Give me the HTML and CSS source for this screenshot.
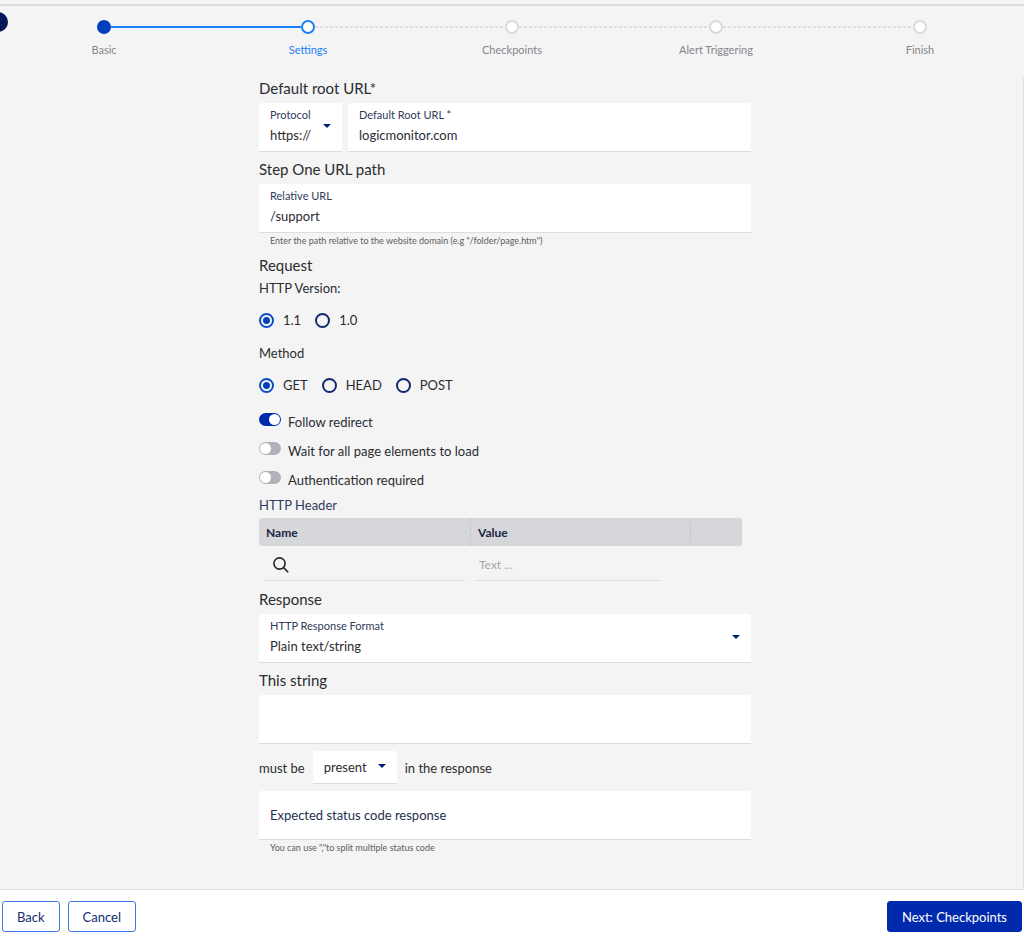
FILE: index.html
```html
<!DOCTYPE html>
<html lang="en">
<head>
<meta charset="utf-8">
<meta name="viewport" content="width=device-width, initial-scale=1">
<title>Website settings</title>
<link rel="stylesheet" href="styles.css">
</head>
<body>
<div class="page">
  <header class="top">
    <button class="collapse" type="button" aria-label="Collapse panel"></button>
    <ol class="steps">
      <li class="step done"><span class="track"><span class="dot"></span></span><span>Basic</span></li>
      <li class="step current" aria-current="step"><span class="track"><span class="dot"></span></span><span>Settings</span></li>
      <li class="step"><span class="track"><span class="dot"></span></span><span>Checkpoints</span></li>
      <li class="step"><span class="track"><span class="dot"></span></span><span>Alert Triggering</span></li>
      <li class="step"><span class="track"><span class="dot"></span></span><span>Finish</span></li>
    </ol>
  </header>

  <main class="content">
    <form class="form" id="settings">
      <h2 class="heading">Default root URL*</h2>
      <div class="url-row">
        <div class="field with-caret">
          <label class="field-label" for="protocol">Protocol</label>
          <select class="control" id="protocol"><option>https://</option><option>http://</option></select>
          <svg class="caret" viewBox="0 0 8 4" aria-hidden="true"><path d="M0 0h8L4 4z"/></svg>
        </div>
        <div class="field">
          <label class="field-label" for="root">Default Root URL *</label>
          <input class="control" id="root" type="text" value="logicmonitor.com">
        </div>
      </div>

      <h2 class="heading">Step One URL path</h2>
      <div class="field">
        <label class="field-label" for="relative">Relative URL</label>
        <input class="control" id="relative" type="text" value="/support">
      </div>
      <p class="hint">Enter the path relative to the website domain (e.g "/folder/page.htm")</p>

      <h2 class="heading">Request</h2>
      <fieldset class="group">
        <legend class="legend">HTTP Version:</legend>
        <div class="radios">
          <label class="radio"><input type="radio" name="version" checked>1.1</label>
          <label class="radio"><input type="radio" name="version">1.0</label>
        </div>
      </fieldset>
      <fieldset class="group">
        <legend class="legend">Method</legend>
        <div class="radios">
          <label class="radio"><input type="radio" name="method" checked>GET</label>
          <label class="radio"><input type="radio" name="method">HEAD</label>
          <label class="radio"><input type="radio" name="method">POST</label>
        </div>
      </fieldset>
      <label class="toggle"><input type="checkbox" role="switch" checked><span>Follow redirect</span></label>
      <label class="toggle"><input type="checkbox" role="switch"><span>Wait for all page elements to load</span></label>
      <label class="toggle"><input type="checkbox" role="switch"><span>Authentication required</span></label>

      <table class="headers">
        <caption>HTTP Header</caption>
        <colgroup><col class="col-name"><col><col class="col-action"></colgroup>
        <thead>
          <tr><th scope="col">Name</th><th scope="col">Value</th><th aria-label="Actions"></th></tr>
        </thead>
        <tbody>
          <tr>
            <td>
              <label class="cell-field cell-name">
                <svg class="search" viewBox="0 0 16 16" aria-hidden="true"><circle cx="6.5" cy="6.5" r="5.6"/><path d="M10.6 10.6L15.2 15.2"/></svg>
                <input type="text" aria-label="Header name">
              </label>
            </td>
            <td><label class="cell-field cell-value"><input type="text" placeholder="Text ..." aria-label="Header value"></label></td>
            <td></td>
          </tr>
        </tbody>
      </table>

      <h2 class="heading">Response</h2>
      <div class="field with-caret">
        <label class="field-label" for="format">HTTP Response Format</label>
        <select class="control" id="format"><option>Plain text/string</option><option>JSON</option></select>
        <svg class="caret" viewBox="0 0 8 4" aria-hidden="true"><path d="M0 0h8L4 4z"/></svg>
      </div>

      <h2 class="heading"><label for="string">This string</label></h2>
      <div class="field single"><input class="control" id="string" type="text"></div>

      <div class="sentence">
        <label for="presence">must be</label>
        <span class="field small with-caret">
          <select class="control" id="presence"><option>present</option><option>absent</option></select>
          <svg class="caret" viewBox="0 0 8 4" aria-hidden="true"><path d="M0 0h8L4 4z"/></svg>
        </span>
        <span>in the response</span>
      </div>

      <div class="field single"><input class="control status" type="text" placeholder="Expected status code response" aria-label="Expected status code response"></div>
      <p class="hint">You can use ","to split multiple status code</p>
    </form>
  </main>

  <footer class="footer">
    <button class="btn" type="button">Back</button>
    <button class="btn" type="button">Cancel</button>
    <button class="btn primary" type="submit" form="settings">Next: Checkpoints</button>
  </footer>
</div>
</body>
</html>
```
FILE: styles.css
```css
* { box-sizing: border-box; }

body {
  margin: 0;
  background: #f4f4f4;
  color: #2b2c30;
  font: 13px/16px Lato, "Open Sans", sans-serif;
}

input, select, button { font: inherit; color: inherit; }

.page {
  min-height: 100vh;
  display: flex;
  flex-direction: column;
}

.top {
  position: relative;
  margin-top: 4px;
  border-top: 2px solid #dbdbdf;
  padding: 14px 2px 20px;
  overflow: hidden;
}

.collapse {
  position: absolute;
  top: 6px;
  left: -12px;
  width: 20px;
  height: 20px;
  padding: 0;
  border: 0;
  border-radius: 50%;
  background: #001855;
}

/* Progress steps */
.steps {
  display: grid;
  grid-template-columns: repeat(5, 1fr);
  margin: 0;
  padding: 0;
  list-style: none;
  font-size: 11px;
  color: #85858c;
}

.step {
  display: flex;
  flex-direction: column;
  gap: 8px;
  text-align: center;
}

.track { display: flex; align-items: center; }

.track::before, .track::after {
  content: "";
  flex: 1;
  height: 2px;
  background: repeating-linear-gradient(90deg, #dfdfe0 0 3px, transparent 3px 5px);
}

.dot {
  width: 14px;
  height: 14px;
  border: 2px solid #dbdbdc;
  border-radius: 50%;
  background: #fff;
}

.step:first-child .track::before, .step:last-child .track::after { background: none; }
.done .track::after, .current .track::before { background: #1d80fa; }
.done .dot { border-color: #003fbe; background: #003fbe; }
.current { color: #1d80fa; }
.current .dot { border-color: #1d80fa; }

/* Form */
.content {
  flex: 1;
  padding: 0 13px 33px 0;
  border-right: 1px solid #dfdfe1;
}

.form { max-width: 492px; margin: 0 auto; }

.heading {
  margin: 7px 0 5px;
  font-size: 15px;
  line-height: 20px;
  font-weight: 400;
}

.heading:first-child { margin-top: 0; }

.url-row {
  display: grid;
  grid-template-columns: 83px 1fr;
  gap: 6px;
}

.field {
  display: grid;
  align-content: center;
  height: 49px;
  padding: 0 11px;
  border-bottom: 1px solid #dcdce4;
  border-radius: 3px 3px 0 0;
  background: #fff;
}

.field-label {
  font-size: 11px;
  line-height: 16px;
  color: #303a5b;
}

.control {
  width: 100%;
  height: 24px;
  padding: 0;
  border: 0;
  outline: 0;
  background: none;
  appearance: none;
}

.with-caret { grid-template-columns: 1fr 8px; }
.with-caret .field-label { grid-area: 1 / 1; }
.with-caret .control { grid-area: 2 / 1; }
.with-caret .caret { grid-area: 1 / 2 / 3 / 3; align-self: center; }

.caret { width: 8px; height: 4px; margin-bottom: 2px; fill: #001f7a; pointer-events: none; }

.status::placeholder { color: #26304f; opacity: 1; }

.hint {
  margin: 0 11px;
  font-size: 9px;
  line-height: 15px;
  color: #5c5d63;
}

.group { margin: 0 0 17px; padding: 0; border: 0; }
.group + .toggle { margin-top: -3px; }
.legend { padding: 0; margin-bottom: 16px; }
.radios { display: flex; gap: 14px; }
.radio { display: flex; gap: 9px; align-items: center; }

.radio input {
  appearance: none;
  width: 15px;
  height: 15px;
  margin: 0;
  border: 2px solid #12296f;
  border-radius: 50%;
}

.radio input:checked {
  border-color: #0f4cc4;
  background: radial-gradient(circle, #0040bd 0 3px, transparent 4px);
}

.toggle {
  display: flex;
  align-items: center;
  gap: 7px;
  height: 29px;
}

.toggle input {
  appearance: none;
  display: flex;
  align-items: center;
  width: 22px;
  height: 13px;
  margin: 0 0 4px;
  padding: 0 1px;
  border-radius: 7px;
  background: #b1b1ba;
}

.toggle input::before {
  content: "";
  width: 11px;
  height: 11px;
  border-radius: 50%;
  background: #fff;
}

.toggle input:checked { justify-content: flex-end; background: #002aad; }

/* HTTP header table */
.headers {
  width: calc(100% - 9px);
  margin: 3px 0 8px;
  border-spacing: 0;
  table-layout: fixed;
}

.headers caption { padding-bottom: 5px; text-align: left; color: #303a5b; }
.col-name { width: 212px; }
.col-action { width: 51px; }

.headers th {
  height: 28px;
  padding: 1px 7px 0;
  border-right: 1px dashed #c3c4c9;
  background: #d6d7db;
  color: #1b2544;
  font-size: 12px;
  font-weight: 700;
  text-align: left;
}

.headers th:first-child { border-radius: 3px 0 0 3px; }
.headers th:last-child { border-right: 0; border-radius: 0 3px 3px 0; }
.headers td { padding: 0; }

.cell-field {
  display: flex;
  align-items: center;
  gap: 8px;
  height: 35px;
  padding-top: 3px;
  border-bottom: 1px solid #dcdce4;
}

.cell-name { margin: 0 6px 0 5px; padding-left: 9px; }
.cell-value { margin: 0 31px 0 4px; padding-left: 4px; }
.cell-field input { flex: 1; min-width: 0; padding: 0; border: 0; outline: 0; background: none; font-size: 12px; }
.cell-field input::placeholder { color: #a4a4a8; opacity: 1; }
.search { width: 16px; height: 16px; fill: none; stroke: #25262a; stroke-width: 1.6; }

/* Response condition */
.sentence {
  display: flex;
  align-items: center;
  gap: 8px;
  margin: 7px 0;
}

.small { width: 84px; height: 33px; }
.small.with-caret .control { grid-area: 1 / 1; }
.small.with-caret .caret { grid-area: 1 / 2; }

/* Footer */
.footer {
  display: flex;
  gap: 8px;
  padding: 11px 2px 10px;
  border-top: 1px solid #dededf;
  background: #fff;
}

.btn {
  height: 31px;
  padding: 0 14px;
  border: 1px solid #3b78ec;
  border-radius: 3px;
  background: #fff;
  color: #142b72;
}

.primary {
  margin-left: auto;
  border-color: #002aad;
  background: #002aad;
  color: #fff;
}
```
